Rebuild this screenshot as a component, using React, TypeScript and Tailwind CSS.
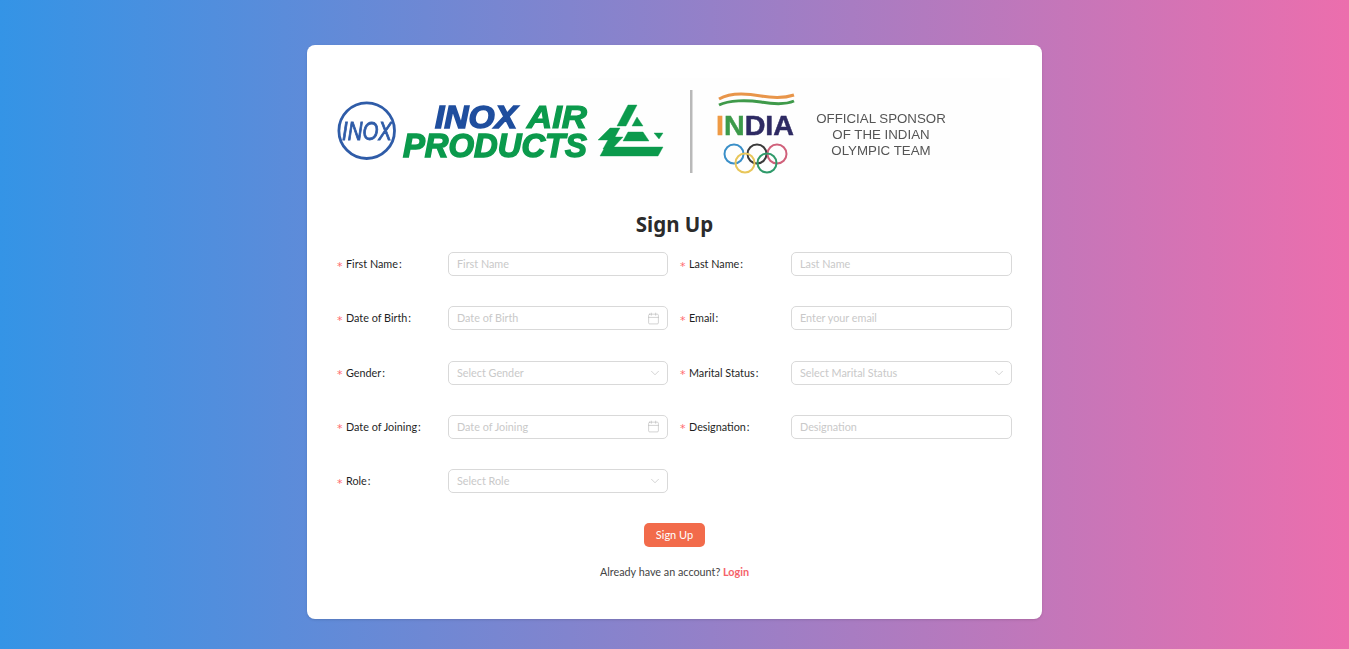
import { Calendar, ChevronDown } from "lucide-react";

type Field = {
  label: string;
  placeholder: string;
  kind?: "date" | "select";
};

const fields: Field[] = [
  { label: "First Name", placeholder: "First Name" },
  { label: "Last Name", placeholder: "Last Name" },
  { label: "Date of Birth", placeholder: "Date of Birth", kind: "date" },
  { label: "Email", placeholder: "Enter your email" },
  { label: "Gender", placeholder: "Select Gender", kind: "select" },
  { label: "Marital Status", placeholder: "Select Marital Status", kind: "select" },
  { label: "Date of Joining", placeholder: "Date of Joining", kind: "date" },
  { label: "Designation", placeholder: "Designation" },
  { label: "Role", placeholder: "Select Role", kind: "select" },
];

const Logo = () => (
  <svg viewBox="0 0 675 100" className="block h-[100px] w-[675px] blur-[0.5px]">
    <rect x="213" y="3" width="460" height="92" fill="#fefefe" />

    {/* Inox roundel */}
    <circle cx="29.7" cy="55.7" r="27.8" fill="none" stroke="#2f5ca8" strokeWidth="2.8" />
    <text x="5" y="65" textLength="50" lengthAdjust="spacingAndGlyphs" fontFamily="Liberation Sans" fontStyle="italic" fontSize="25" fill="#2f5ca8" stroke="#2f5ca8" strokeWidth="0.9">INOX</text>

    {/* Wordmark */}
    <text x="98" y="53" textLength="82" lengthAdjust="spacingAndGlyphs" fontFamily="Liberation Sans" fontStyle="italic" fontWeight="700" fontSize="32" fill="#1f4e9e" stroke="#1f4e9e" strokeWidth="1.5">INOX</text>
    <text x="190" y="53" textLength="60" lengthAdjust="spacingAndGlyphs" fontFamily="Liberation Sans" fontStyle="italic" fontWeight="700" fontSize="32" fill="#0b9a4c" stroke="#0b9a4c" strokeWidth="1.2">AIR</text>
    <text x="66" y="82" textLength="184" lengthAdjust="spacingAndGlyphs" fontFamily="Liberation Sans" fontStyle="italic" fontWeight="700" fontSize="33" fill="#0b9a4c" stroke="#0b9a4c" strokeWidth="1.5">PRODUCTS</text>

    {/* Green triangle mark */}
    <g fill="#0b9a4c" stroke="#0b9a4c" strokeWidth="0.4">
      <polygon points="291,30 300,30 289,51 280,51" />
      <polygon points="300,42 306,51 295,51" />
      <polygon points="273,53 283,53 278,62 286,62 275,74 266,74 271,65 261,65" />
      <polygon points="291,57 306,57 312,66 286,66" />
      <polygon points="317,58 326,58 322,64" />
      <polygon points="268,72 326,72 321,81 263,81" />
    </g>

    {/* Divider */}
    <rect x="353" y="15" width="2.5" height="83" fill="#b9b9b9" />

    {/* India flag wave */}
    <path d="M382 24 C392 18 408 18 424 21 C436 23 448 23 457 20" fill="none" stroke="#e8954a" strokeWidth="3" />
    <path d="M382 30 C392 25 410 25 424 27 C436 29 448 30 457 26" fill="none" stroke="#3f9a4a" strokeWidth="3" />
    <text x="379" y="60" textLength="78" lengthAdjust="spacingAndGlyphs" fontFamily="Liberation Sans" fontWeight="700" fontSize="28" fill="#2e2a63" stroke="#2e2a63" strokeWidth="0.5">
      <tspan fill="#ef9a45" stroke="#ef9a45">I</tspan><tspan fill="#3c9a4a" stroke="#3c9a4a">N</tspan>DIA
    </text>

    {/* Olympic rings */}
    <g fill="none" strokeWidth="2">
      <circle cx="397" cy="79" r="9.5" stroke="#3a8fc8" />
      <circle cx="420" cy="79" r="9.5" stroke="#3a3a3a" />
      <circle cx="440" cy="79" r="9.5" stroke="#d0607a" />
      <circle cx="408" cy="88" r="9.5" stroke="#e8c65a" />
      <circle cx="430" cy="88" r="9.5" stroke="#2f9a6a" />
    </g>

    {/* Sponsor copy */}
    <g fontFamily="Liberation Sans" fontSize="13.3" fill="#555" textAnchor="middle">
      <text x="544" y="48">OFFICIAL SPONSOR</text>
      <text x="544" y="64">OF THE INDIAN</text>
      <text x="544" y="80">OLYMPIC TEAM</text>
    </g>
  </svg>
);

const FormField = ({ label, placeholder, kind }: Field) => (
  <div className="flex h-[24px] items-center">
    <label className="flex w-[111px] shrink-0 items-center text-[10.8px] text-[#1f1f1f]">
      <span className="mr-[3px] w-[6px] translate-y-[2px] font-['DejaVu_Sans',sans-serif] text-[11px] leading-none text-[#ff6b6e]">*</span>
      {label}
      <span className="ml-[1px]">:</span>
    </label>
    <div className="flex h-full flex-1 items-center justify-between rounded-[5px] border border-[#d9d9d9] bg-white px-2">
      <span className="text-[10.8px] text-[#c9c9c9]">{placeholder}</span>
      {kind === "date" && <Calendar size={13} strokeWidth={1.1} className="-mr-[1px] text-[#b5b5b5]" />}
      {kind === "select" && <ChevronDown size={14} strokeWidth={1} className="-mr-[3px] text-[#b5b5b5]" />}
    </div>
  </div>
);

export default function App() {
  return (
    <div className="h-[649px] overflow-hidden bg-[linear-gradient(90deg,#3494e6,#ec6ead)] pt-[45px] font-['Lato',sans-serif]">
      <div className="mx-auto h-[574px] w-[735px] rounded-lg bg-white px-[30px] pt-[30px] shadow-sm">
        <Logo />

        <h1 className="mt-[33px] h-[32px] text-center font-['Noto_Sans',sans-serif] text-[20.5px] leading-[32px] font-bold text-[#2b2b2b]">Sign Up</h1>

        <div className="mt-[12px] grid grid-cols-[331px_332px] gap-x-[12px] gap-y-[30.33px]">
          {fields.map((field) => (
            <FormField key={field.label} {...field} />
          ))}
        </div>

        <div className="mt-[29.7px] flex justify-center">
          <button className="h-[24px] w-[61px] rounded-[5px] bg-[#f26b4b] pt-[1px] text-[11px] text-white">Sign Up</button>
        </div>

        <p className="mt-[17px] text-center text-[10.8px] text-[#444]">
          Already have an account? <a className="font-bold text-[#f5626a]">Login</a>
        </p>
      </div>
    </div>
  );
}
